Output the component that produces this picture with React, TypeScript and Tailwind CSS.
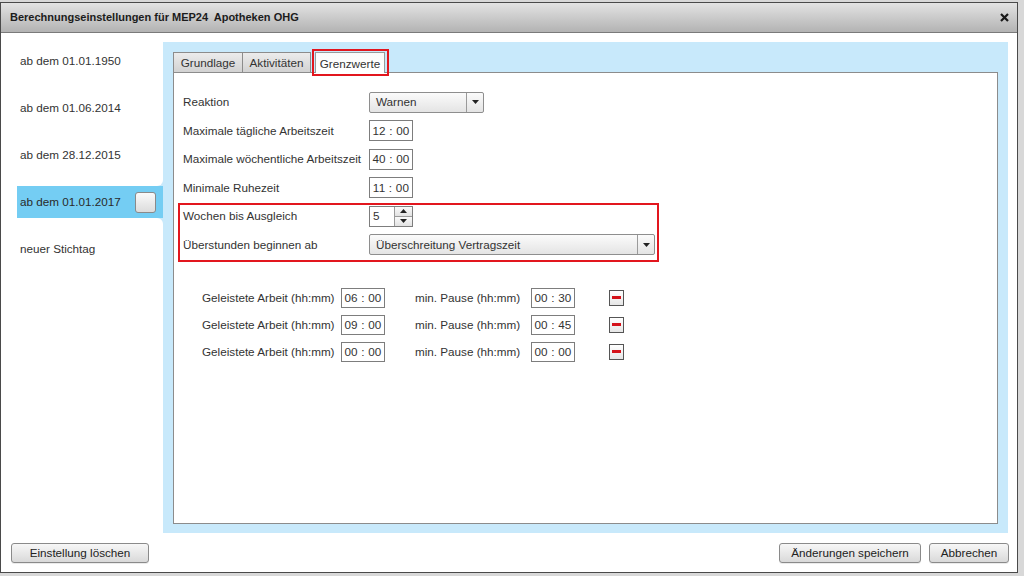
import React from "react";

function TimeBox({ value, h = "h-[21px]" }: { value: string; h?: string }) {
  return (
    <div
      className={`w-[44px] ${h} border border-[#7d7d7d] bg-white flex items-center justify-center text-[#333] tracking-[0.2px]`}
    >
      {value.replace(":", " : ")}
    </div>
  );
}

function Arrow({ up = false }: { up?: boolean }) {
  return (
    <svg width="7" height="4" viewBox="0 0 7 4" className="block">
      {up ? <path d="M0 4 L3.5 0 L7 4 Z" fill="#222" /> : <path d="M0 0 L7 0 L3.5 4 Z" fill="#222" />}
    </svg>
  );
}

function Select({ value, w }: { value: string; w: string }) {
  return (
    <div
      className={`${w} h-[21px] border border-[#8e8e8e] rounded-[2px] bg-linear-to-b from-[#fbfbfb] to-[#e4e4e4] flex items-stretch`}
    >
      <div className="flex-1 flex items-center pl-[6px] text-[#333]">{value}</div>
      <div className="w-[17px] border-l border-[#9a9a9a] flex items-center justify-center">
        <Arrow />
      </div>
    </div>
  );
}

function Row({ label, children }: { label: string; children: React.ReactNode }) {
  return (
    <div className="h-[28.5px] flex items-center">
      <div className="w-[186px] shrink-0 text-[#333]">{label}</div>
      {children}
    </div>
  );
}

function PauseRow({ work, pause }: { work: string; pause: string }) {
  return (
    <div className="h-[27px] flex items-center pl-[19px]">
      <div className="w-[139px] shrink-0">Geleistete Arbeit (hh:mm)</div>
      <TimeBox value={work} h="h-[20px]" />
      <div className="w-[146px] shrink-0 pl-[30px]">min. Pause (hh:mm)</div>
      <TimeBox value={pause} h="h-[20px]" />
      <div className="ml-[34px] w-[15px] h-[16px] border border-[#555] bg-linear-to-b from-white to-[#e6e6e6] flex items-center justify-center">
        <div className="w-[9px] h-[3px] bg-[#d4121a]" />
      </div>
    </div>
  );
}

function Button({ children, w }: { children: React.ReactNode; w: string }) {
  return (
    <div
      className={`${w} h-[20px] border border-[#8a8a8a] rounded-[3px] bg-linear-to-b from-[#f7f7f7] to-[#d9d9d9] flex items-center justify-center text-[#222] shadow-[0_1px_0_rgba(0,0,0,0.08)]`}
    >
      {children}
    </div>
  );
}

export default function App() {
  const dates = ["ab dem 01.01.1950", "ab dem 01.06.2014", "ab dem 28.12.2015"];
  return (
    <div className="relative w-[1024px] h-[576px] overflow-hidden bg-[#d8d8d8] font-['Liberation_Sans',Arial,sans-serif] text-[11.7px] text-[#333] leading-none">
      <div className="pt-[2px]">
        <div className="w-[1018px] h-[571px] border border-[#4a4a4a] bg-white flex flex-col">
          {/* title bar */}
          <div className="h-[30px] shrink-0 flex items-center justify-between pl-[9px] pr-[8px] bg-linear-to-b from-[#e3e3e3] to-[#b3b3b3] border-b border-[#7a7a7a]">
            <span className="font-bold text-[11px] text-[#1c1c1c]">Berechnungseinstellungen für MEP24&nbsp; Apotheken OHG</span>
            <svg width="9" height="9" viewBox="0 0 9 9">
              <path d="M1 1 L8 8 M8 1 L1 8" stroke="#1a1a1a" strokeWidth="2.2" />
            </svg>
          </div>

          {/* body */}
          <div className="flex h-[500px] shrink-0">
            {/* left list */}
            <div className="w-[162px] shrink-0 pt-[4.5px]">
              {dates.map((d) => (
                <div key={d} className="h-[47px] flex items-center pl-[19px]">
                  {d}
                </div>
              ))}
              <div className="h-[47px] flex items-center">
                <div className="relative ml-[16px] w-[146px] h-[32px] bg-[#74cdf3] flex items-center justify-between pl-[3px] pr-[7px]">
                  <span className="text-[#2a2a2a]">ab dem 01.01.2017</span>
                  <div className="w-[21px] h-[21px] border border-[#8a8a8a] rounded-[3px] bg-linear-to-b from-[#fafafa] to-[#dcdcdc]" />
                  <div className="absolute right-0 top-[-6px] w-[6px] h-[6px] bg-[#c8e9fb]">
                    <div className="w-full h-full bg-white rounded-br-[6px]" />
                  </div>
                  <div className="absolute right-0 bottom-[-6px] w-[6px] h-[6px] bg-[#c8e9fb]">
                    <div className="w-full h-full bg-white rounded-tr-[6px]" />
                  </div>
                </div>
              </div>
              <div className="h-[47px] flex items-center pl-[19px]">neuer Stichtag</div>
            </div>

            {/* blue panel */}
            <div className="mt-[9px] w-[845px] h-[491px] bg-[#c8e9fb] pt-[10px] px-[10px] pb-[9px] flex flex-col">
              {/* tabs */}
              <div className="h-[20px] flex items-end shrink-0 relative z-10">
                <div className="w-[70px] h-[20px] border border-b-0 border-[#8c8c8c] bg-linear-to-b from-[#ececec] to-[#d2d2d2] flex items-center justify-center">
                  Grundlage
                </div>
                <div className="w-[69px] h-[20px] -ml-px border border-b-0 border-[#8c8c8c] bg-linear-to-b from-[#ececec] to-[#d2d2d2] flex items-center justify-center">
                  Aktivitäten
                </div>
                <div className="relative ml-[4px] w-[70px] h-[21px] -mb-px border border-b-0 border-[#9a9a9a] bg-linear-to-b from-[#fbfbfb] to-white flex items-center justify-center pt-[1px]">
                  Grenzwerte
                  <div className="absolute left-[-4px] top-[-4px] w-[77px] h-[27px] border-2 border-[#e2161e]" />
                </div>
              </div>
              {/* panel */}
              <div className="flex-1 border border-[#8c8c8c] bg-white pl-[9px] pt-[15px]">
                <Row label="Reaktion">
                  <Select value="Warnen" w="w-[115px]" />
                </Row>
                <Row label="Maximale tägliche Arbeitszeit">
                  <TimeBox value="12:00" />
                </Row>
                <Row label="Maximale wöchentliche Arbeitszeit">
                  <TimeBox value="40:00" />
                </Row>
                <Row label="Minimale Ruhezeit">
                  <TimeBox value="11:00" />
                </Row>
                <div className="relative">
                  <Row label="Wochen bis Ausgleich">
                    <div className="w-[44px] h-[21px] border border-[#7d7d7d] bg-white flex">
                      <div className="flex-1 flex items-center pl-[3px]">5</div>
                      <div className="w-[18px] border-l border-[#9a9a9a] flex flex-col">
                        <div className="flex-1 flex items-center justify-center bg-linear-to-b from-[#fafafa] to-[#e2e2e2] border-b border-[#9a9a9a]">
                          <Arrow up />
                        </div>
                        <div className="flex-1 flex items-center justify-center bg-linear-to-b from-[#fafafa] to-[#e2e2e2]">
                          <Arrow />
                        </div>
                      </div>
                    </div>
                  </Row>
                  <Row label="Überstunden beginnen ab">
                    <Select value="Überschreitung Vertragszeit" w="w-[286px]" />
                  </Row>
                  <div className="absolute left-[-5px] top-[1px] w-[481px] h-[59px] border-2 border-[#e2161e]" />
                </div>

                <div className="mt-[25px]">
                  <PauseRow work="06:00" pause="00:30" />
                  <PauseRow work="09:00" pause="00:45" />
                  <PauseRow work="00:00" pause="00:00" />
                </div>
              </div>
            </div>
          </div>

          {/* footer */}
          <div className="flex justify-between pl-[10px] pr-[8px] pt-[10px]">
            <Button w="w-[138px]">Einstellung löschen</Button>
            <div className="flex gap-[8px]">
              <Button w="w-[142px]">Änderungen speichern</Button>
              <Button w="w-[80px]">Abbrechen</Button>
            </div>
          </div>
        </div>
      </div>
    </div>
  );
}
